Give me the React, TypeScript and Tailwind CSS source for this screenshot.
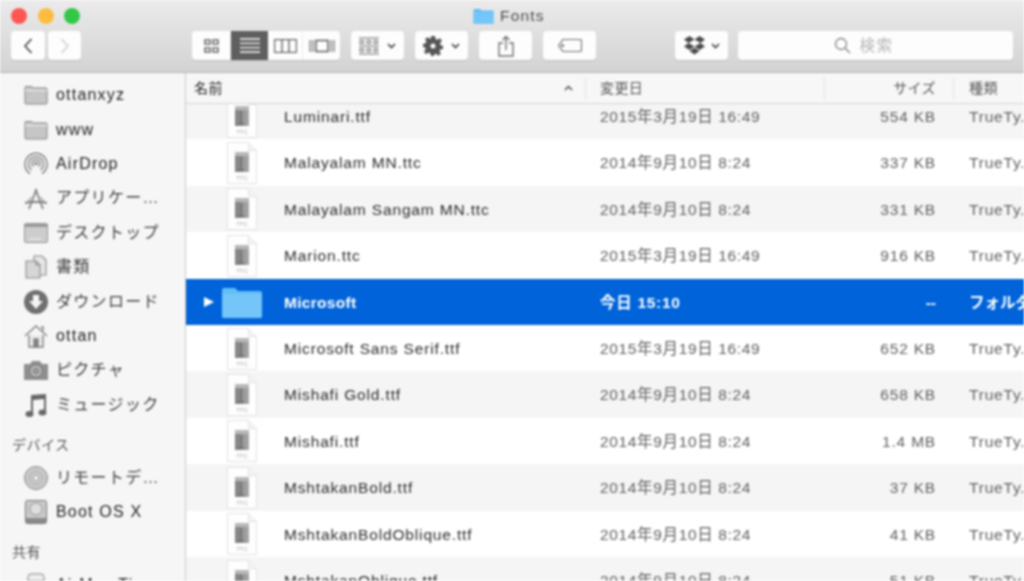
import type { ReactNode } from 'react';

const rows = [
  { name: 'Luminari.ttf', date: '2015年3月19日 16:49', size: '554 KB', kind: 'TrueTy...' },
  { name: 'Malayalam MN.ttc', date: '2014年9月10日 8:24', size: '337 KB', kind: 'TrueTy...' },
  { name: 'Malayalam Sangam MN.ttc', date: '2014年9月10日 8:24', size: '331 KB', kind: 'TrueTy...' },
  { name: 'Marion.ttc', date: '2015年3月19日 16:49', size: '916 KB', kind: 'TrueTy...' },
  { name: 'Microsoft', date: '今日 15:10', size: '--', kind: 'フォルダ', selected: true },
  { name: 'Microsoft Sans Serif.ttf', date: '2015年3月19日 16:49', size: '652 KB', kind: 'TrueTy...' },
  { name: 'Mishafi Gold.ttf', date: '2014年9月10日 8:24', size: '658 KB', kind: 'TrueTy...' },
  { name: 'Mishafi.ttf', date: '2014年9月10日 8:24', size: '1.4 MB', kind: 'TrueTy...' },
  { name: 'MshtakanBold.ttf', date: '2014年9月10日 8:24', size: '37 KB', kind: 'TrueTy...' },
  { name: 'MshtakanBoldOblique.ttf', date: '2014年9月10日 8:24', size: '41 KB', kind: 'TrueTy...' },
  { name: 'MshtakanOblique.ttf', date: '2014年9月10日 8:24', size: '51 KB', kind: 'TrueTy...' },
];

function FolderGlyph() {
  return (
    <svg width="24" height="20" viewBox="0 0 24 20">
      <path d="M1 2.5a1 1 0 0 1 1-1h6l1.5 1.5H22a1 1 0 0 1 1 1V18a1 1 0 0 1-1 1H2a1 1 0 0 1-1-1z" fill="#c6c6c6" stroke="#858585" />
      <path d="M1 5.5h22" stroke="#f0f0f0" />
    </svg>
  );
}

function BlueFolder({ width, height }: { width: number; height: number }) {
  return (
    <svg width={width} height={height} viewBox="0 0 40 32">
      <path d="M0 4a2 2 0 0 1 2-2h11l3 3h22a2 2 0 0 1 2 2v23a2 2 0 0 1-2 2H2a2 2 0 0 1-2-2z" fill="#63bdf6" />
      <path d="M0 8h40v22a2 2 0 0 1-2 2H2a2 2 0 0 1-2-2z" fill="#74c6f9" />
    </svg>
  );
}

function FontFile() {
  return (
    <svg width="32" height="44" viewBox="0 0 32 44">
      <path d="M1.5 1.5h21l8 8v33h-29z" fill="#fefefe" stroke="#e2e2e2" />
      <path d="M22.5 1.5v8h8" fill="#f4f4f4" stroke="#e2e2e2" />
      <defs>
        <linearGradient id="ttfFace" x1="0" x2="1" y1="0" y2="0">
          <stop offset="0" stopColor="#808080" />
          <stop offset="1" stopColor="#a8a8a8" />
        </linearGradient>
      </defs>
      <rect x="9" y="11" width="14" height="20" fill="url(#ttfFace)" />
      <rect x="9" y="11" width="14" height="4" fill="#b8b8b8" />
      <path d="M15 29V16M12 29h6" fill="none" stroke="#707070" strokeWidth="1.6" />
      <text x="16" y="39" textAnchor="middle" fontSize="6" fill="#a8a8a8" fontFamily="Liberation Sans, sans-serif">TTC</text>
    </svg>
  );
}

const sideIcons: Record<string, ReactNode> = {
  folder: <FolderGlyph />,
  airdrop: (
    <svg width="24" height="24" viewBox="0 0 24 24" fill="none" stroke="#808080" strokeWidth="1.5">
      <path d="M6 21.5a11 11 0 1 1 12 0" />
      <path d="M7.5 18a7.5 7.5 0 1 1 9 0" />
      <path d="M9.5 14.5a4 4 0 1 1 5 0" />
      <circle cx="12" cy="11.5" r="1" fill="#808080" />
    </svg>
  ),
  apps: (
    <svg width="24" height="24" viewBox="0 0 24 24" fill="none" stroke="#808080" strokeWidth="1.8">
      <path d="M5 23L12.5 3M19 23L11.5 3M1 17l5-1h12l5 1" />
      <path d="M7 11l-3 5M17 11l3 5" strokeWidth="1" />
    </svg>
  ),
  desktop: (
    <svg width="24" height="20" viewBox="0 0 24 20">
      <rect x="0.5" y="0.5" width="23" height="19" rx="1.5" fill="#cdcdcd" stroke="#969696" />
      <rect x="1" y="1" width="22" height="3" fill="#9a9a9a" />
      <path d="M6 16h12" stroke="#f4f4f4" strokeWidth="1.6" strokeDasharray="2 1" />
    </svg>
  ),
  docs: (
    <svg width="24" height="24" viewBox="0 0 24 24" stroke="#8a8a8a" strokeWidth="1.1">
      <path d="M10 1h8l4 4v15H10z" fill="#e6e6e6" />
      <path d="M2 6h10l4 4v13H2z" fill="#d6d6d6" />
      <path d="M12 6v4h4" fill="none" />
    </svg>
  ),
  download: (
    <svg width="24" height="24" viewBox="0 0 24 24">
      <circle cx="12" cy="12" r="12" fill="#707070" />
      <path d="M9 5h6v6h4l-7 8-7-8h4z" fill="#f5f5f5" />
    </svg>
  ),
  home: (
    <svg width="24" height="24" viewBox="0 0 24 24" fill="#ececec" stroke="#808080" strokeWidth="1.4">
      <path d="M5 11v12h14V11" />
      <path d="M1 12L12 2l11 10" fill="none" />
      <path d="M17 3h2v4" fill="none" />
      <rect x="10" y="15" width="4" height="8" fill="#808080" />
    </svg>
  ),
  camera: (
    <svg width="24" height="20" viewBox="0 0 24 20">
      <path d="M0 4h6l2-3h8l2 3h6v16H0z" fill="#8f8f8f" />
      <circle cx="12" cy="11" r="6" fill="#c4c4c4" stroke="#707070" />
      <circle cx="12" cy="11" r="3" fill="#a0a0a0" stroke="#707070" />
    </svg>
  ),
  music: (
    <svg width="22" height="24" viewBox="0 0 22 24" fill="#666">
      <path d="M6 2l15-1v18h-2V6L8 7v15H6z" />
      <ellipse cx="4.5" cy="21" rx="4" ry="3" />
      <ellipse cx="17.5" cy="19.5" rx="4" ry="3" />
    </svg>
  ),
  disc: (
    <svg width="24" height="24" viewBox="0 0 24 24">
      <circle cx="12" cy="12" r="11.5" fill="#c8c8c8" stroke="#8a8a8a" />
      <circle cx="12" cy="12" r="6" fill="#d8d8d8" stroke="#a0a0a0" />
      <circle cx="12" cy="12" r="3" fill="#f2f2f2" stroke="#8a8a8a" />
    </svg>
  ),
  drive: (
    <svg width="22" height="24" viewBox="0 0 22 24">
      <rect x="0.5" y="0.5" width="21" height="23" rx="2" fill="#c9c9c9" stroke="#777" />
      <circle cx="11" cy="9" r="6" fill="#dedede" stroke="#999" />
      <rect x="1" y="18" width="20" height="5" fill="#8a8a8a" />
    </svg>
  ),
  airmac: (
    <svg width="20" height="24" viewBox="0 0 20 24">
      <rect x="2" y="1" width="16" height="22" rx="3" fill="#eee" stroke="#888" />
      <path d="M2 8h16" stroke="#888" />
    </svg>
  ),
};

function SideItem({ icon, label, latin }: { icon: string; label: string; latin?: boolean }) {
  return (
    <div className="flex h-[34.4px] items-center">
      <div className="ml-[24px] flex w-[24px] shrink-0 justify-center">{sideIcons[icon]}</div>
      <span className={`ml-[8px] whitespace-nowrap text-[16px] ${latin ? 'tracking-[1.2px] text-[#222]' : 'tracking-[1.3px] text-[#404040]'}`}>{label}</span>
    </div>
  );
}

function ToolButton({ className, children }: { className: string; children: ReactNode }) {
  return (
    <div className={`flex h-[29px] items-center justify-center rounded-[4px] bg-[#fdfdfd] shadow-[0_1px_1px_rgba(0,0,0,0.12)] ${className}`}>
      {children}
    </div>
  );
}

function Caret() {
  return (
    <svg width="9" height="6" viewBox="0 0 9 6" fill="none" stroke="#444" strokeWidth="1.7">
      <path d="M1 1l3.5 3.5L8 1" />
    </svg>
  );
}

export default function App() {
  return (
    <div className="flex h-[581px] w-[1024px] flex-col overflow-hidden bg-white font-['Liberation_Sans','Noto_Sans_CJK_JP',sans-serif] blur-[0.8px]">
      <div className="h-[73px] shrink-0 border-b border-[#b4b4b4] bg-gradient-to-b from-[#ebebeb] to-[#d3d3d3]">
        <div className="flex h-[31px] items-center pl-[11px] pt-[1px]">
          <div className="flex gap-[10.5px]">
            <span className="h-[16px] w-[16px] rounded-full bg-[#fc5753]" />
            <span className="h-[16px] w-[16px] rounded-full bg-[#fdbc40]" />
            <span className="h-[16px] w-[16px] rounded-full bg-[#33c748]" />
          </div>
          <div className="ml-[393px] flex items-center gap-[6px] text-[15.5px] tracking-[1.2px] text-[#4a4a4a]">
            <BlueFolder width={21} height={16} />
            <span>Fonts</span>
          </div>
        </div>
        <div className="flex items-center pl-[11px]">
          <ToolButton className="w-[34px]">
            <svg width="12" height="18" viewBox="0 0 12 18" fill="none" stroke="#333" strokeWidth="1.4"><path d="M9.5 2L3 9l6.5 7" /></svg>
          </ToolButton>
          <ToolButton className="ml-[3px] w-[33px]">
            <svg width="12" height="18" viewBox="0 0 12 18" fill="none" stroke="#cccccc" strokeWidth="1.4"><path d="M2.5 2L9 9l-6.5 7" /></svg>
          </ToolButton>

          <div className="ml-[111px] flex h-[29px] w-[148px] overflow-hidden rounded-[4px] bg-[#fdfdfd] shadow-[0_1px_1px_rgba(0,0,0,0.12)]">
            <div className="flex w-[39px] items-center justify-center border-r border-[#e8e8e8]">
              <svg width="15" height="14" viewBox="0 0 15 14" fill="none" stroke="#666" strokeWidth="1.5"><rect x="1" y="1" width="5" height="4" /><rect x="9" y="1" width="5" height="4" /><rect x="1" y="9" width="5" height="4" /><rect x="9" y="9" width="5" height="4" /></svg>
            </div>
            <div className="flex w-[37px] items-center justify-center bg-[#5f5f5f]">
              <svg width="20" height="15" viewBox="0 0 20 15" stroke="#ffffff" strokeWidth="1.3"><path d="M0 1h20M0 5.3h20M0 9.6h20M0 14h20" /></svg>
            </div>
            <div className="flex w-[35px] items-center justify-center border-r border-[#eeeeee]">
              <svg width="23" height="14" viewBox="0 0 23 14" fill="none" stroke="#666" strokeWidth="1.4"><rect x="0.5" y="0.5" width="22" height="13" /><path d="M8 0v14M15 0v14" /></svg>
            </div>
            <div className="flex w-[37px] items-center justify-center">
              <svg width="26" height="14" viewBox="0 0 26 14" fill="none" stroke="#666" strokeWidth="1.2"><rect x="7" y="1.5" width="12" height="11" strokeWidth="1.6" /><path d="M1 1v12M4 1v12M22 1v12M25 1v12" /></svg>
            </div>
          </div>

          <ToolButton className="ml-[11px] w-[53px] gap-[8px]">
            <svg width="20" height="18" viewBox="0 0 20 18" fill="none" stroke="#666"><path d="M0 1h20M0 9h20M0 17h20" /><path d="M1 3.5h3.5v3H1zM8 3.5h3.5v3H8zM15 3.5h3.5v3H15zM1 11.5h3.5v3H1zM8 11.5h3.5v3H8zM15 11.5h3.5v3H15z" /></svg>
            <Caret />
          </ToolButton>
          <ToolButton className="ml-[11px] w-[53px] gap-[8px]">
            <svg width="20" height="20" viewBox="0 0 20 20" fill="#555">
              <path fillRule="evenodd" d="M8 0h4l.5 3 1.8.8L17 2.2 19 5l-2 2 .4 2 2.6.9v3l-2.8.7-.7 1.8 1.5 2.4-2.8 2-2-2-1.8.5L11 20H8l-.7-2.8-1.8-.6-2.4 1.6L1 15.5l1.7-2.3-.6-1.8L0 11V8l2.6-.7.7-1.8L2 3l2.8-1.8 2.2 1.6 1-.4zM10 7.5a2.5 2.5 0 1 0 0 5 2.5 2.5 0 0 0 0-5z" />
            </svg>
            <Caret />
          </ToolButton>
          <ToolButton className="ml-[11px] w-[53px]">
            <svg width="16" height="22" viewBox="0 0 16 22" fill="none" stroke="#707070" strokeWidth="1.4"><path d="M5 8H1v13h14V8h-4M8 15V1.5M4.5 5L8 1.5 11.5 5" /></svg>
          </ToolButton>
          <ToolButton className="ml-[11px] w-[53px]">
            <svg width="24" height="13" viewBox="0 0 24 13" fill="none" stroke="#707070" strokeWidth="1.2"><path d="M5 .5h17a1.5 1.5 0 0 1 1.5 1.5v9a1.5 1.5 0 0 1-1.5 1.5H5L.5 6.5z" /><circle cx="4.5" cy="6.5" r="1" /></svg>
          </ToolButton>

          <ToolButton className="ml-[79px] w-[53px] gap-[6px]">
            <svg width="21" height="19" viewBox="0 0 21 19" fill="#4a4a4a"><path d="M5.5 0L0 3.6l4.5 3.5 6-3.6zM15.5 0L21 3.6l-4.5 3.5-6-3.6zM0 10.5l5.5 3.6 5-3.5-6-3.5zM21 10.5l-5.5 3.6-5-3.5 6-3.5zM5.5 15l5 3.5 5-3.5-5-3.3z" /></svg>
            <Caret />
          </ToolButton>
          <ToolButton className="ml-[10px] w-[275px] pr-[23px]">
            <svg width="17" height="17" viewBox="0 0 17 17" fill="none" stroke="#808080" strokeWidth="1.3"><circle cx="7" cy="7" r="5.5" /><path d="M11 11l5 5" /></svg>
            <span className="ml-[8px] text-[15.5px] tracking-[1.5px] text-[#b4b4b4]">検索</span>
          </ToolButton>
        </div>
      </div>

      <div className="flex min-h-0 flex-1">
        <aside className="w-[186px] shrink-0 overflow-hidden border-r border-[#c9c9c9] bg-[#f6f6f6] pt-[5px]">
          <SideItem icon="folder" label="ottanxyz" latin />
          <SideItem icon="folder" label="www" latin />
          <SideItem icon="airdrop" label="AirDrop" latin />
          <SideItem icon="apps" label="アプリケー…" />
          <SideItem icon="desktop" label="デスクトップ" />
          <SideItem icon="docs" label="書類" />
          <SideItem icon="download" label="ダウンロード" />
          <SideItem icon="home" label="ottan" latin />
          <SideItem icon="camera" label="ピクチャ" />
          <SideItem icon="music" label="ミュージック" />
          <div className="mt-[9px] flex h-[30px] items-center pl-[12px] text-[14px] tracking-[0.5px] text-[#555]">デバイス</div>
          <SideItem icon="disc" label="リモートデ…" />
          <SideItem icon="drive" label="Boot OS X" latin />
          <div className="mt-[7px] flex h-[31px] items-center pl-[12px] text-[14px] tracking-[0.5px] text-[#555]">共有</div>
          <SideItem icon="airmac" label="AirMac Time" latin />
        </aside>

        <main className="flex min-w-0 flex-1 flex-col overflow-hidden">
          <div className="flex h-[31px] shrink-0 items-center border-b border-[#d6d6d6] bg-[#f7f7f7] text-[14px] tracking-[0.4px] text-[#555]">
            <div className="flex h-[23px] w-[400px] items-center justify-between border-r border-[#e4e4e4] pl-[8px] pr-[12px]">
              <span className="text-[#222]">名前</span>
              <svg width="9" height="6" viewBox="0 0 9 6" fill="none" stroke="#444" strokeWidth="1.4"><path d="M1 5l3.5-3.5L8 5" /></svg>
            </div>
            <div className="flex h-[23px] w-[239px] items-center border-r border-[#e4e4e4] pl-[14px]">変更日</div>
            <div className="flex h-[23px] w-[129px] items-center justify-end border-r border-[#e4e4e4] pr-[17px]">サイズ</div>
            <div className="pl-[15px]">種類</div>
          </div>
          <div className="min-h-0 flex-1 overflow-hidden">
            <div className="mt-[-11px]">
              {rows.map((row, i) => (
                <div
                  key={row.name}
                  className={`flex h-[46.4px] items-center pt-[1px] text-[15.5px] ${
                    row.selected ? 'bg-[#0063d9] text-white' : i % 2 === 0 ? 'bg-[#f5f5f5]' : 'bg-white'
                  }`}
                >
                  <div className="flex w-[400px] shrink-0 items-center">
                    <div className="flex w-[36px] shrink-0 justify-center pl-[9px]">
                      {row.selected && (
                        <svg width="12" height="12" viewBox="0 0 12 12" fill="#fff"><path d="M1 1l10 5-10 5z" /></svg>
                      )}
                    </div>
                    <div className="flex w-[40px] shrink-0 justify-center">
                      {row.selected ? <BlueFolder width={40} height={32} /> : <FontFile />}
                    </div>
                    <span className={`ml-[22px] whitespace-nowrap ${row.selected ? 'font-bold tracking-[0.3px]' : 'tracking-[0.85px] text-[#2a2a2a]'}`}>{row.name}</span>
                  </div>
                  <div className={`w-[239px] shrink-0 whitespace-nowrap pl-[14px] ${row.selected ? 'font-bold tracking-[0.7px]' : 'tracking-[0.65px] text-[#606060]'}`}>{row.date}</div>
                  <div className={`w-[129px] shrink-0 whitespace-nowrap pr-[18px] text-right ${row.selected ? 'font-bold' : 'tracking-[0.8px] text-[#606060]'}`}>{row.size}</div>
                  <div className={`whitespace-nowrap pl-[15px] ${row.selected ? 'font-bold' : 'tracking-[0.8px] text-[#606060]'}`}>{row.kind}</div>
                </div>
              ))}
            </div>
          </div>
        </main>
      </div>
    </div>
  );
}
